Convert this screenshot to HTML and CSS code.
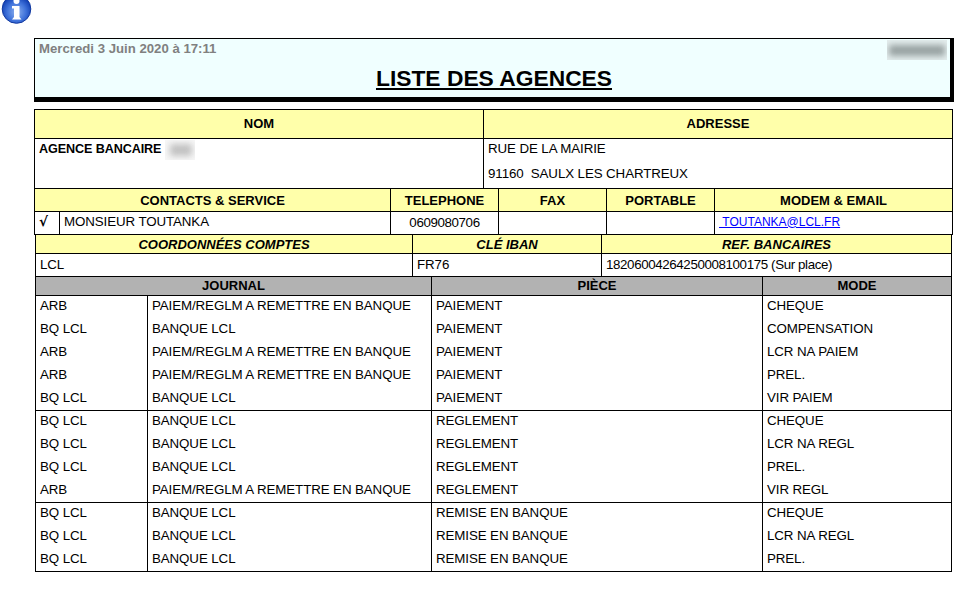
FILE: index.html
```html
<!DOCTYPE html>
<html lang="fr">
<head>
<meta charset="utf-8">
<title>Liste des agences</title>
<link rel="stylesheet" href="styles.css">
</head>
<body>
<div class="icon-bar">
  <svg class="info-icon" width="34" height="25" viewBox="0 0 34 25" aria-hidden="true">
    <defs>
      <radialGradient id="ball" cx="0.5" cy="0.6" r="0.55">
        <stop offset="0" stop-color="#8fb2ee"/>
        <stop offset="0.6" stop-color="#3f72da"/>
        <stop offset="1" stop-color="#1240b4"/>
      </radialGradient>
    </defs>
    <circle cx="16.5" cy="9" r="14.3" fill="url(#ball)" stroke="#1038a0" stroke-width="1"/>
    <circle cx="16.5" cy="1" r="3" fill="#fff"/>
    <path d="M12 6 L19.5 6 L19.5 17 L21.5 19.5 L12 19.5 L14 17 L14 8.5 L12 8.5 Z" fill="#fff"/>
  </svg>
</div>

<header class="title-box">
  <div class="title-top">
    <span class="date">Mercredi 3 Juin 2020 à 17:11</span>
    <span class="blur-box blur-site"><span class="blur-ink"></span></span>
  </div>
  <h1 class="title">LISTE DES AGENCES</h1>
</header>

<table class="grid grid-outer grid-first">
  <colgroup><col class="c-nom"><col class="c-adr"></colgroup>
  <tr class="row-head-tall"><th class="yellow">NOM</th><th class="yellow">ADRESSE</th></tr>
  <tr class="row-address">
    <td><strong class="agency">AGENCE BANCAIRE</strong> <span class="blur-box blur-agency"><span class="blur-ink"></span></span></td>
    <td><div class="addr-line">RUE DE LA MAIRIE</div><div class="addr-line">91160&nbsp; SAULX LES CHARTREUX</div></td>
  </tr>
</table>

<table class="grid grid-outer">
  <colgroup><col class="c-chk"><col class="c-name"><col class="c-tel"><col class="c-tel"><col class="c-tel"><col class="c-mail"></colgroup>
  <tr class="row-23 row-heads"><th class="yellow" colspan="2">CONTACTS &amp; SERVICE</th><th class="yellow">TELEPHONE</th><th class="yellow">FAX</th><th class="yellow">PORTABLE</th><th class="yellow">MODEM &amp; EMAIL</th></tr>
  <tr class="row-23 row-data"><td class="check">√</td><td>MONSIEUR TOUTANKA</td><td class="center digits">0609080706</td><td></td><td></td><td><a class="mail" href="#">&nbsp;TOUTANKA@LCL.FR</a></td></tr>
</table>

<table class="grid grid-inner">
  <colgroup><col class="c-coord"><col class="c-iban"><col class="c-ref"></colgroup>
  <tr class="row-19"><th class="yellow ital">COORDONNÉES COMPTES</th><th class="yellow ital">CLÉ IBAN</th><th class="yellow ital">REF. BANCAIRES</th></tr>
  <tr class="row-23"><td>LCL</td><td>FR76</td><td class="digits">18206004264250008100175 (Sur place)</td></tr>
</table>

<table class="grid grid-inner">
  <colgroup><col class="c-j1"><col class="c-j2"><col class="c-piece"><col class="c-mode"></colgroup>
  <thead>
    <tr class="row-19"><th class="grey" colspan="2">JOURNAL</th><th class="grey">PIÈCE</th><th class="grey">MODE</th></tr>
  </thead>
  <tbody class="group">
    <tr class="row-23"><td>ARB</td><td>PAIEM/REGLM A REMETTRE EN BANQUE</td><td>PAIEMENT</td><td>CHEQUE</td></tr>
    <tr class="row-23"><td>BQ LCL</td><td>BANQUE LCL</td><td>PAIEMENT</td><td>COMPENSATION</td></tr>
    <tr class="row-23"><td>ARB</td><td>PAIEM/REGLM A REMETTRE EN BANQUE</td><td>PAIEMENT</td><td>LCR NA PAIEM</td></tr>
    <tr class="row-23"><td>ARB</td><td>PAIEM/REGLM A REMETTRE EN BANQUE</td><td>PAIEMENT</td><td>PREL.</td></tr>
    <tr class="row-23"><td>BQ LCL</td><td>BANQUE LCL</td><td>PAIEMENT</td><td>VIR PAIEM</td></tr>
  </tbody>
  <tbody class="group">
    <tr class="row-23"><td>BQ LCL</td><td>BANQUE LCL</td><td>REGLEMENT</td><td>CHEQUE</td></tr>
    <tr class="row-23"><td>BQ LCL</td><td>BANQUE LCL</td><td>REGLEMENT</td><td>LCR NA REGL</td></tr>
    <tr class="row-23"><td>BQ LCL</td><td>BANQUE LCL</td><td>REGLEMENT</td><td>PREL.</td></tr>
    <tr class="row-23"><td>ARB</td><td>PAIEM/REGLM A REMETTRE EN BANQUE</td><td>REGLEMENT</td><td>VIR REGL</td></tr>
  </tbody>
  <tbody class="group">
    <tr class="row-23"><td>BQ LCL</td><td>BANQUE LCL</td><td>REMISE EN BANQUE</td><td>CHEQUE</td></tr>
    <tr class="row-23"><td>BQ LCL</td><td>BANQUE LCL</td><td>REMISE EN BANQUE</td><td>LCR NA REGL</td></tr>
    <tr class="row-23"><td>BQ LCL</td><td>BANQUE LCL</td><td>REMISE EN BANQUE</td><td>PREL.</td></tr>
  </tbody>
</table>
</body>
</html>
```
FILE: styles.css
```css
* { box-sizing: border-box; }
html, body { margin: 0; padding: 0; background: #fff; }
body {
  font-family: "Liberation Sans", Arial, sans-serif;
  font-size: 13.33px;
  color: #000;
  overflow: hidden;
  height: 605px;
}
.icon-bar { height: 38px; }
.info-icon { display: block; }

.title-box {
  margin-left: 34px;
  width: 920px;
  height: 64px;
  background: #f0ffff;
  border: 1px solid #000;
  border-right-width: 4px;
  border-bottom-width: 5px;
  padding: 1px 3px 0 4px;
}
.title-top { display: flex; justify-content: space-between; height: 17px; }
.date { font-weight: bold; font-size: 13.2px; line-height: 17px; color: #808080; }
.blur-box { display: inline-block; overflow: hidden; }
.blur-ink { display: block; }
.blur-site {
  width: 60px; height: 20px;
  background: #e4eeee;
  flex: none;
}
.blur-site .blur-ink {
  margin: 5px 2px 0 2px; height: 11px;
  background: #98a2a2;
  filter: blur(3px);
}
.blur-agency {
  width: 30px; height: 20px;
  background: #f7f7f7;
  vertical-align: top;
}
.blur-agency .blur-ink {
  margin: 4px 3px 0 5px; height: 12px;
  background: #c2c2c2;
  filter: blur(3px);
}
.title {
  margin: 8px 0 0;
  padding-left: 2px;
  font-size: 22.8px;
  line-height: 27px;
  font-weight: bold;
  text-align: center;
  text-decoration: underline;
}

.grid { border-collapse: separate; border-spacing: 0; table-layout: fixed; border-left: 1px solid #000; }
.grid-outer { margin-left: 34px; width: 919px; }
.grid-first { border-top: 1px solid #000; margin-top: 7px; }
.grid-inner { margin-left: 35px; width: 917px; }
.grid th, .grid td {
  border-right: 1px solid #000;
  border-bottom: 1px solid #000;
  padding: 0 0 0 4px;
  font-size: 13.33px;
  letter-spacing: -0.1px;
  line-height: 16px;
  overflow: hidden;
  white-space: nowrap;
}
.grid th { padding: 0; text-align: center; font-weight: bold; font-size: 13px; letter-spacing: 0; }
.grid td.digits { letter-spacing: -0.38px; }
.yellow { background: #ffffaa; }
.grey { background: #b2b2b2; }
.grid th.ital { font-style: italic; padding-top: 1px; }
.center { text-align: center; }
.grid td.center { padding: 0; }
.check { font-weight: bold; font-family: "DejaVu Sans", sans-serif; }
.mail { color: #0000ff; font-size: 12px; letter-spacing: 0; }
.agency { font-size: 12.6px; line-height: 18px; vertical-align: top; }

.c-nom { width: 449px; }
.c-adr { width: 469px; }
.c-chk { width: 25px; }
.c-name { width: 331px; }
.c-tel { width: 108px; }
.c-mail { width: 238px; }
.c-coord { width: 377px; }
.c-iban { width: 189px; }
.c-ref { width: 350px; }
.c-j1 { width: 112px; }
.c-j2 { width: 284px; }
.c-piece { width: 331px; }
.c-mode { width: 189px; }

.row-head-tall th { height: 29px; }
.row-address td { height: 50px; vertical-align: top; padding-top: 1px; }
.row-address .blur-agency { margin-top: 0; }
.addr-line { line-height: 18px; }
.addr-line + .addr-line { margin-top: 7px; }
.row-23 td, .row-23 th { height: 23px; }
.row-19 th { height: 19px; }
.grid .row-heads th { padding-top: 1px; }
.row-data td { padding-bottom: 3px; }
.group .row-23 td { border-bottom: 0; vertical-align: top; padding-top: 2px; }
.group .row-23:last-child td { border-bottom: 1px solid #000; }
```
